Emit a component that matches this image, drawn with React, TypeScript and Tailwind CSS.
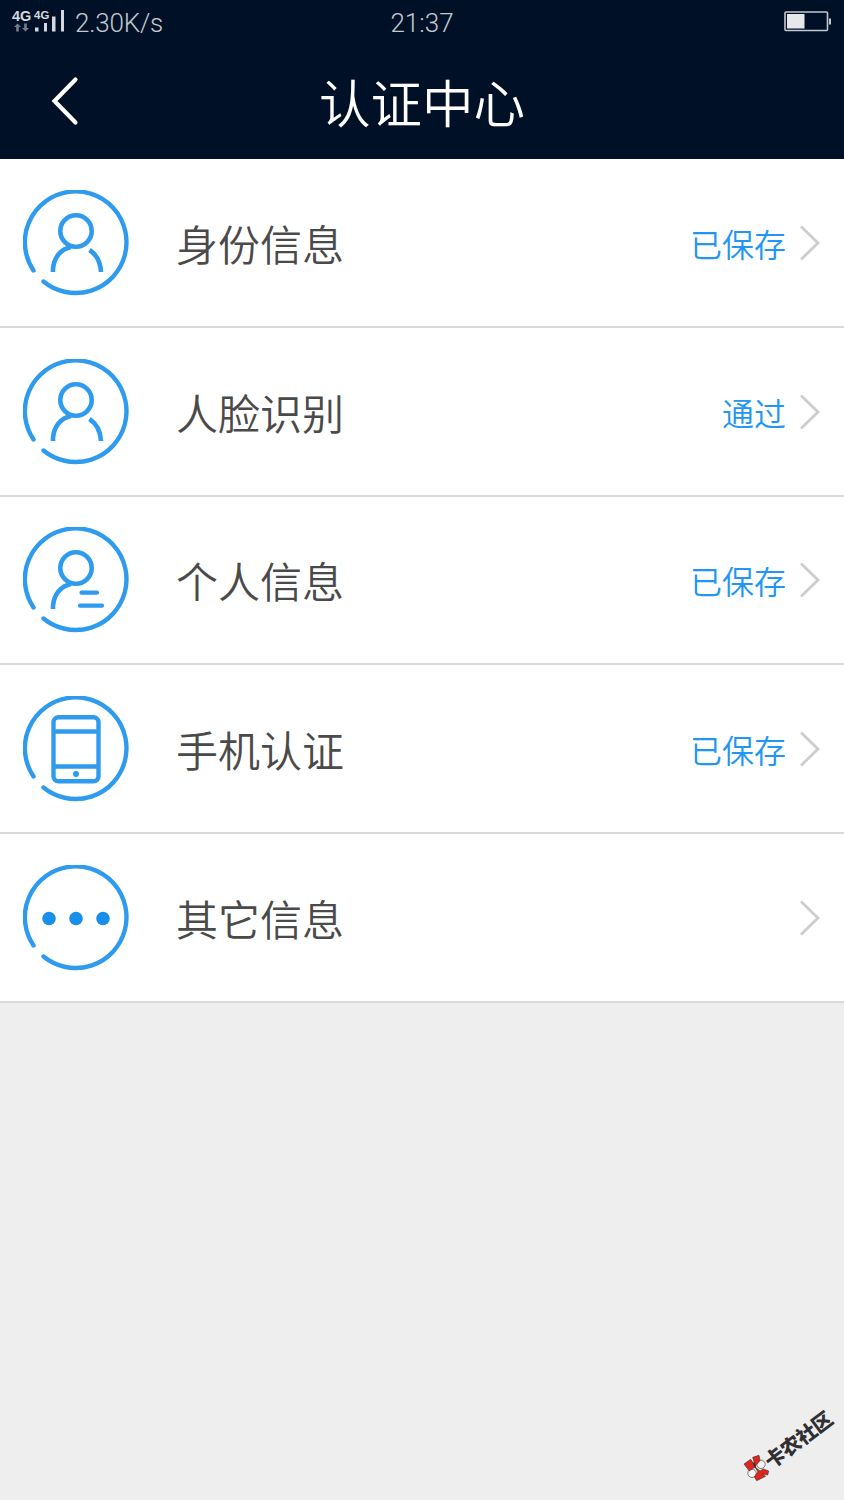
import type { ReactNode } from 'react'

type Item = {
  title: string
  status?: string
  icon: ReactNode
}

function Ring({ children }: { children: ReactNode }) {
  return (
    <svg className="w-[106px] h-[106px] shrink-0" viewBox="0 0 106 106" fill="none" stroke="#2f9bee" strokeWidth="4.4" strokeLinecap="round">
      <path d="M10.5 80.5A50.8 50.8 0 1 1 20.5 91.5" />
      {children}
    </svg>
  )
}

const PersonIcon = (
  <Ring>
    <circle cx="53" cy="41" r="15.7" strokeWidth="4.6" />
    <path d="M30 82V79C31 67 38 59 48 57" strokeWidth="4.6" strokeLinecap="butt" />
    <path d="M66.5 60C74 65 77.5 72 78 82" strokeWidth="4.6" strokeLinecap="butt" />
  </Ring>
)

const ProfileIcon = (
  <Ring>
    <circle cx="53" cy="41" r="15.7" strokeWidth="4.6" />
    <path d="M30 82V79C31 67 38 59 48 57" strokeWidth="4.6" strokeLinecap="butt" />
    <path d="M58.5 65.7H74M57 78.7H79" strokeWidth="4.2" />
  </Ring>
)

const PhoneIcon = (
  <Ring>
    <rect x="30.5" y="21.3" width="45" height="64" rx="5" />
    <path d="M31 35.5H75M31 70.5H75" strokeLinecap="butt" />
    <circle cx="53" cy="78" r="3" fill="#2f9bee" stroke="none" />
  </Ring>
)

const MoreIcon = (
  <Ring>
    <g fill="#1a8fea" stroke="none">
      <circle cx="26" cy="53.5" r="6.8" />
      <circle cx="53" cy="53.5" r="6.8" />
      <circle cx="80" cy="53.5" r="6.8" />
    </g>
  </Ring>
)

const items: Item[] = [
  { title: '身份信息', status: '已保存', icon: PersonIcon },
  { title: '人脸识别', status: '通过', icon: PersonIcon },
  { title: '个人信息', status: '已保存', icon: ProfileIcon },
  { title: '手机认证', status: '已保存', icon: PhoneIcon },
  { title: '其它信息', icon: MoreIcon },
]

function StatusBar() {
  return (
    <div className="h-[44px] grid grid-cols-3 items-center text-[#c3c8d0] font-['Roboto',sans-serif] text-[26px] leading-[44px]">
      <div className="flex items-center pl-[10px]">
        <svg className="w-[56px] h-[32px] mb-[2px]" viewBox="-2 -4 56 32" fill="#d5d9df">
          <text x="0" y="11" fontSize="14.5" fontWeight="700" fontFamily="Liberation Sans">4G</text>
          <text x="22" y="8.8" fontSize="11.5" fontWeight="700" fontFamily="Liberation Sans">4G</text>
          <path d="M5.5 13.5L9 17H6.8V21.5H4.2V17H2ZM13.5 21.5L10 18H12.2V13.5H14.8V18H17Z" fill="#747d8b" />
          <path d="M23 17.5H26.5V21.5H23ZM32 13H35V21.5H32ZM40 6.5H43.5V21.5H40ZM49 0H52V21.5H49Z" />
        </svg>
        <span className="ml-[9px] tracking-[-0.2px]">2.30K/s</span>
      </div>
      <span className="text-center pt-px">21:37</span>
      <div className="flex justify-end pr-[12px] pb-[2px]">
        <svg className="w-[48px] h-[22px]" viewBox="0 0 48 22" fill="none">
          <rect x="1" y="1" width="42.5" height="18.5" rx="1" stroke="#c3c8d0" strokeWidth="1.6" />
          <rect x="3" y="3" width="17.5" height="14.5" fill="#e6e8ea" />
          <rect x="45" y="7.5" width="2" height="6" fill="#c3c8d0" />
        </svg>
      </div>
    </div>
  )
}

function Row({ title, status, icon }: Item) {
  return (
    <li className="h-[168.75px] flex items-center pt-px pl-[23px] pr-[24px] bg-white border-b-2 border-[#d9d9d9]">
      {icon}
      <span className="ml-[47px] flex-1 text-[42px] leading-none text-[#4a4a4a]">{title}</span>
      {status && <span className="text-[32px] leading-none text-[#2196f3]">{status}</span>}
      <svg className="ml-[14px] w-[20px] h-[36px]" viewBox="0 0 20 36" fill="none" stroke="#cdcdcd" strokeWidth="2.8">
        <path d="M1 1.5L18 18L1 34.5" />
      </svg>
    </li>
  )
}

function Watermark() {
  return (
    <div className="absolute left-[740px] top-[1396px] w-[104px] h-[100px]">
      <svg className="w-full h-full" viewBox="-4 -8 104 100">
        <g stroke="#2b2b2b" strokeWidth="0.6">
          <circle cx="17" cy="60.3" r="4.2" fill="#f5f5f5" />
          <circle cx="8" cy="69.3" r="4.2" fill="#f5f5f5" />
          <path d="M0 60L6.7 55.3L11.5 62.5L5.3 67Z" fill="#e1251b" />
          <path d="M8.7 53.3L15 51.3L16 56.7L11.3 62Z" fill="#e1251b" />
          <path d="M11 63L16 67L19.3 65L24.7 67L23.7 71L18.3 69.7L21.5 72.3L12.7 76.7L10.3 72.7L14 68Z" fill="#e1251b" />
          <path d="M9.5 58.5L11.5 64" strokeWidth="1.4" />
        </g>
        <text
          transform="translate(27.5 65.5) rotate(-37)"
          fontSize="20"
          fontWeight="900"
          fill="#303034"
          textLength="79"
          fontFamily="'Noto Sans CJK SC', sans-serif"
        >
          卡农社区
        </text>
      </svg>
    </div>
  )
}

export default function App() {
  return (
    <div className="relative w-[844px] h-[1500px] overflow-hidden bg-[#eeeeee] font-[350] font-['Noto_Sans_CJK_SC',sans-serif]">
      <header className="h-[159px] bg-[#001027]">
        <StatusBar />
        <div className="h-[113px] grid grid-cols-[100px_1fr_100px] items-center">
          <button type="button" aria-label="返回" className="pl-[51px]">
            <svg className="w-[28px] h-[50px]" viewBox="0 0 28 50" fill="none" stroke="#ffffff" strokeWidth="4.2" strokeLinecap="round">
              <path d="M24.5 3.5L3.5 25L24.5 46.5" />
            </svg>
          </button>
          <h1 className="text-center text-[51.5px] leading-none text-white">认证中心</h1>
        </div>
      </header>
      <ul>
        {items.map((item) => (
          <Row key={item.title} {...item} />
        ))}
      </ul>
      <Watermark />
    </div>
  )
}
